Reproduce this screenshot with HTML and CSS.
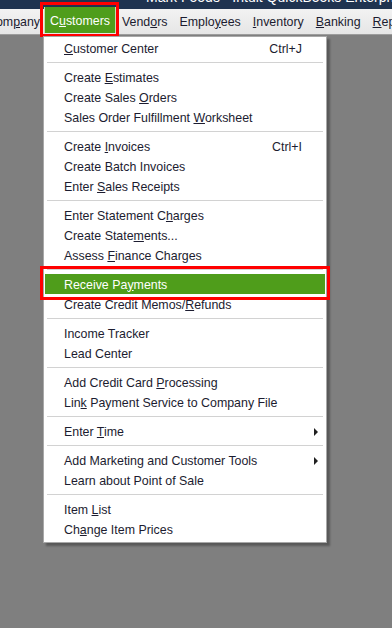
FILE: index.html
```html
<!DOCTYPE html>
<html>
<head>
<meta charset="utf-8">
<link rel="stylesheet" href="styles.css">
</head>
<body>
<div class="titlebar"><span class="title-text">Mark Foods - Intuit QuickBooks Enterprise</span></div>
<div class="menubar">
  <span class="mb-item mb-first">Com<u>p</u>any</span>
  <span class="mb-item mb-active">C<u>u</u>stomers</span>
  <span class="mb-item">Vend<u>o</u>rs</span>
  <span class="mb-item">Emplo<u>y</u>ees</span>
  <span class="mb-item"><u>I</u>nventory</span>
  <span class="mb-item"><u>B</u>anking</span>
  <span class="mb-item"><u>R</u>eports</span>
</div>
<div class="workspace">
  <div class="dropdown">
    <div class="item"><span><u>C</u>ustomer Center</span><span class="sc">Ctrl+J</span></div>
    <div class="sep"></div>
    <div class="item"><span>Create <u>E</u>stimates</span></div>
    <div class="item"><span>Create Sales <u>O</u>rders</span></div>
    <div class="item"><span>Sales Order Fulfillment <u>W</u>orksheet</span></div>
    <div class="sep"></div>
    <div class="item"><span>Create <u>I</u>nvoices</span><span class="sc">Ctrl+I</span></div>
    <div class="item"><span>Create Batch Invoices</span></div>
    <div class="item"><span>Enter <u>S</u>ales Receipts</span></div>
    <div class="sep"></div>
    <div class="item"><span>Enter Statement C<u>h</u>arges</span></div>
    <div class="item"><span>Create State<u>m</u>ents...</span></div>
    <div class="item"><span>Assess <u>F</u>inance Charges</span></div>
    <div class="sep"></div>
    <div class="item item-hl"><span>Receive Pa<u>y</u>ments</span></div>
    <div class="item"><span>Create Credit Memos/<u>R</u>efunds</span></div>
    <div class="sep"></div>
    <div class="item"><span>Income Tracker</span></div>
    <div class="item"><span>Lead Center</span></div>
    <div class="sep"></div>
    <div class="item"><span>Add Credit Card <u>P</u>rocessing</span></div>
    <div class="item"><span>Lin<u>k</u> Payment Service to Company File</span></div>
    <div class="sep"></div>
    <div class="item"><span>Enter <u>T</u>ime</span><span class="arrow"></span></div>
    <div class="sep"></div>
    <div class="item"><span>Add Marketing and Customer Tools</span><span class="arrow"></span></div>
    <div class="item"><span>Learn about Point of Sale</span></div>
    <div class="sep"></div>
    <div class="item"><span>Item <u>L</u>ist</span></div>
    <div class="item"><span>Ch<u>a</u>nge Item Prices</span></div>
  </div>
</div>
</body>
</html>
```

FILE: styles.css
```css
html, body {
  margin: 0;
  padding: 0;
}
body {
  width: 392px;
  height: 628px;
  overflow: hidden;
  background: #7f7f7f;
  font-family: "Liberation Sans", Arial, sans-serif;
  font-size: 12.4px;
  color: #1c1c30;
}
u {
  text-decoration: underline;
  text-underline-offset: 1px;
}
.titlebar {
  height: 9px;
  background: #1f3350;
  overflow: hidden;
  position: relative;
}
.title-text {
  position: absolute;
  left: 146px;
  top: -11px;
  color: #ffffff;
  font-size: 14px;
  line-height: 16px;
  white-space: nowrap;
}
.menubar {
  height: 25px;
  display: flex;
  align-items: stretch;
  background: linear-gradient(#f2f2f2, #e6e6e6);
  border-bottom: 1px solid #9c9c9c;
  white-space: nowrap;
  position: relative;
}
.mb-item {
  display: flex;
  align-items: center;
  padding: 0 6px;
  position: relative;
}
.mb-first {
  margin-left: -19px;
  padding: 0 1px 0 6px;
}
.mb-active {
  background: #4f9d1b;
  color: #ffffff;
  margin: -2px 0 1px 3px;
  padding: 2px 5px 0 5px;
  border: 1px solid #c8e0b4;
  border-width: 0 1px;
}
.mb-active::after {
  content: "";
  position: absolute;
  left: -5px;
  right: -4px;
  top: -5px;
  bottom: -4px;
  border: 3px solid #ff0000;
}
.workspace {
  position: relative;
}
.dropdown {
  position: absolute;
  left: 43px;
  top: 1px;
  width: 282px;
  padding: 1px 0 3px;
  background: #ffffff;
  border: 1px solid #a8a8a8;
  box-shadow: 3px 3px 2px rgba(0, 0, 0, 0.3);
}
.item {
  height: 19px;
  padding: 1px 23px 0 19px;
  display: flex;
  align-items: center;
  justify-content: space-between;
  margin: 0 1px;
  position: relative;
  white-space: nowrap;
}
.item-hl {
  background: #4f9d1b;
  color: #ffffff;
}
.item-hl::after {
  content: "";
  position: absolute;
  left: -5px;
  right: -5px;
  top: -8px;
  bottom: -6px;
  border: 3px solid #ff0000;
}
.sc {
  color: #1c1c30;
}
.arrow {
  width: 0;
  height: 0;
  border-top: 4px solid transparent;
  border-bottom: 4px solid transparent;
  border-left: 4px solid #202020;
  margin-right: -16px;
}
.sep {
  height: 9px;
  display: flex;
  align-items: center;
  padding: 0 3px;
}
.sep::before {
  content: "";
  flex: 1;
  height: 1px;
  background: #d2d2d2;
}
```
